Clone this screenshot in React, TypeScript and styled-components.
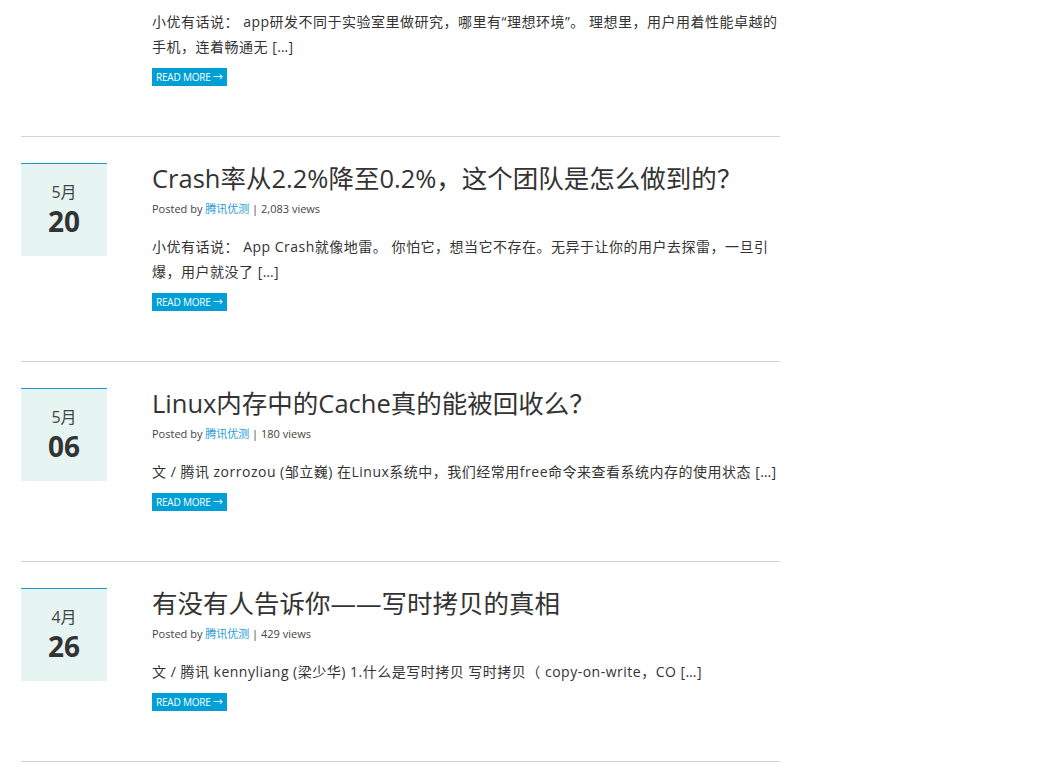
import React from "react";
import styled, { createGlobalStyle } from "styled-components";

const Global = createGlobalStyle`
  html, body { margin: 0; padding: 0; background: #fff; }
  body {
    font-family: "Open Sans", "Noto Sans CJK SC", sans-serif;
    color: #333;
  }
`;

const Page = styled.main`
  width: 759px;
  padding-left: 21px;
`;

const Article = styled.article<{ $top: number }>`
  display: flex;
  align-items: flex-start;
  gap: 45px;
  padding: ${(p) => p.$top}px 0 50px;
  border-bottom: 1px solid #d3d3d3;
`;

const DateBox = styled.div`
  flex: 0 0 86px;
  box-sizing: border-box;
  height: 93px;
  border-top: 1px solid #1a9bd0;
  background: #e6f5f2;
  display: flex;
  flex-direction: column;
  align-items: center;
  padding-top: 18px;
`;

const DateSpacer = styled.div`
  flex: 0 0 86px;
`;

const Month = styled.div`
  font-size: 16px;
  line-height: 20px;
  color: #444;
`;

const Day = styled.div`
  font-size: 28px;
  font-weight: 700;
  line-height: 38px;
  color: #333;
`;

const Body = styled.div`
  flex: 1;
  min-width: 0;
`;

const Title = styled.h2`
  margin: 0 0 7px;
  font-size: 25.5px;
  font-weight: 400;
  line-height: 30px;
  color: #333;
`;

const Meta = styled.div`
  font-size: 11px;
  line-height: 18px;
  color: #444;
  margin-bottom: 16px;
`;

const Author = styled.a`
  color: #2a9ed8;
  text-decoration: none;
`;

const Excerpt = styled.p`
  margin: 0 0 9px;
  font-size: 14px;
  line-height: 25px;
  letter-spacing: 0.5px;
  color: #333;
`;

const ReadMore = styled.a`
  display: flex;
  align-items: center;
  width: max-content;
  height: 18px;
  padding: 0 4px;
  background: #009fd6;
  color: #fff;
  font-size: 10px;
  line-height: 18px;
  text-transform: uppercase;
  text-decoration: none;
  letter-spacing: -0.2px;
`;

type Post = {
  month?: string;
  day?: string;
  title?: string;
  views?: string;
  excerpt: string;
};

const posts: Post[] = [
  {
    excerpt:
      "小优有话说： app研发不同于实验室里做研究，哪里有“理想环境”。 理想里，用户用着性能卓越的手机，连着畅通无 […]",
  },
  {
    month: "5月",
    day: "20",
    title: "Crash率从2.2%降至0.2%，这个团队是怎么做到的？",
    views: "2,083 views",
    excerpt:
      "小优有话说： App Crash就像地雷。 你怕它，想当它不存在。无异于让你的用户去探雷，一旦引爆，用户就没了 […]",
  },
  {
    month: "5月",
    day: "06",
    title: "Linux内存中的Cache真的能被回收么？",
    views: "180 views",
    excerpt:
      "文 / 腾讯 zorrozou (邹立巍) 在Linux系统中，我们经常用free命令来查看系统内存的使用状态 […]",
  },
  {
    month: "4月",
    day: "26",
    title: "有没有人告诉你——写时拷贝的真相",
    views: "429 views",
    excerpt:
      "文 / 腾讯 kennyliang (梁少华) 1.什么是写时拷贝 写时拷贝（ copy-on-write，CO […]",
  },
];

export default function App() {
  return (
    <>
      <Global />
      <Page>
        {posts.map((p, i) => (
          <Article key={i} $top={p.title ? 26 : 9}>
            {p.title ? (
              <DateBox>
                <Month>{p.month}</Month>
                <Day>{p.day}</Day>
              </DateBox>
            ) : (
              <DateSpacer />
            )}
            <Body>
              {p.title && (
                <>
                  <Title>{p.title}</Title>
                  <Meta>
                    Posted by <Author href="#">腾讯优测</Author> | {p.views}
                  </Meta>
                </>
              )}
              <Excerpt>{p.excerpt}</Excerpt>
              <ReadMore href="#">Read More →</ReadMore>
            </Body>
          </Article>
        ))}
      </Page>
    </>
  );
}
